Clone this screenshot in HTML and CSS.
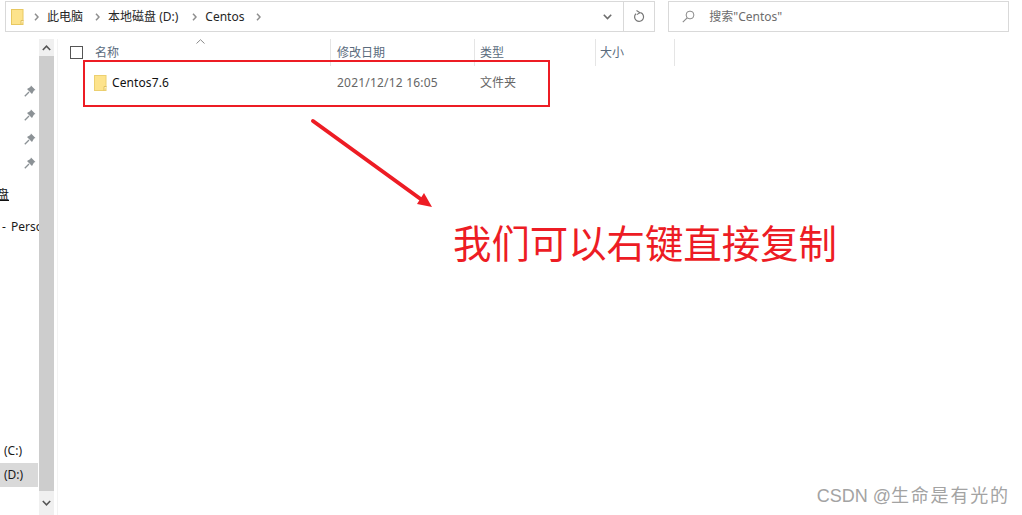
FILE: index.html
```html
<!DOCTYPE html>
<html lang="zh-CN">
<head>
<meta charset="utf-8">
<title>Centos</title>
<link rel="stylesheet" href="styles.css">
</head>
<body>
<div class="window">
  <header class="topbar">
    <div class="address">
      <svg class="crumb-folder" width="13" height="16" viewBox="0 0 13 16"><rect x="0.5" y="0.5" width="11.5" height="15" fill="#fde38c" stroke="#e8c860"/><path d="M10 15.5V11.5H12.5" fill="#fff3c4" stroke="#e0c060"/></svg>
      <svg class="sep" width="5" height="8" viewBox="0 0 5 8"><path d="M1 0.8L4 4L1 7.2" fill="none" stroke="#8f8f8f" stroke-width="1.5"/></svg>
      <span class="crumb">此电脑</span>
      <svg class="sep" width="5" height="8" viewBox="0 0 5 8"><path d="M1 0.8L4 4L1 7.2" fill="none" stroke="#8f8f8f" stroke-width="1.5"/></svg>
      <span class="crumb">本地磁盘 (D:)</span>
      <svg class="sep sep-wide" width="5" height="8" viewBox="0 0 5 8"><path d="M1 0.8L4 4L1 7.2" fill="none" stroke="#8f8f8f" stroke-width="1.5"/></svg>
      <span class="crumb">Centos</span>
      <svg class="sep" width="5" height="8" viewBox="0 0 5 8"><path d="M1 0.8L4 4L1 7.2" fill="none" stroke="#8f8f8f" stroke-width="1.5"/></svg>
      <span class="spacer"></span>
      <svg class="chev" width="9" height="6" viewBox="0 0 9 6"><path d="M0.8 0.8L4.5 4.5L8.2 0.8" fill="none" stroke="#6d6d6d" stroke-width="1.6"/></svg>
      <div class="refresh">
        <svg width="12" height="13" viewBox="0 0 12 13"><path d="M7.5 2.6A4.5 4.5 0 1 1 3 3.6" fill="none" stroke="#777" stroke-width="1.2"/><path d="M3.5 0.5L7 2.7L3.8 4.6" fill="none" stroke="#777" stroke-width="1.1"/></svg>
      </div>
    </div>
    <div class="search">
      <svg width="13" height="13" viewBox="0 0 13 13"><circle cx="8" cy="5" r="3.9" fill="none" stroke="#8a8a8a"/><path d="M5.2 7.8L0.8 12.2" stroke="#8a8a8a" stroke-width="1.1"/></svg>
      <span class="search-text">搜索"Centos"</span>
    </div>
  </header>

  <div class="content">
    <nav class="nav">
      <div class="nav-row pin-row"><svg class="pin" width="12" height="12" viewBox="0 0 12 12"><path d="M7 0.5L11.5 5L10 5.6L8 9L3 4L6.4 2Z" fill="#8c9296"/><path d="M5 7L0.8 11.2" stroke="#8c9296" stroke-width="1.3"/></svg></div>
      <div class="nav-row pin-row"><svg class="pin" width="12" height="12" viewBox="0 0 12 12"><path d="M7 0.5L11.5 5L10 5.6L8 9L3 4L6.4 2Z" fill="#8c9296"/><path d="M5 7L0.8 11.2" stroke="#8c9296" stroke-width="1.3"/></svg></div>
      <div class="nav-row pin-row"><svg class="pin" width="12" height="12" viewBox="0 0 12 12"><path d="M7 0.5L11.5 5L10 5.6L8 9L3 4L6.4 2Z" fill="#8c9296"/><path d="M5 7L0.8 11.2" stroke="#8c9296" stroke-width="1.3"/></svg></div>
      <div class="nav-row pin-row"><svg class="pin" width="12" height="12" viewBox="0 0 12 12"><path d="M7 0.5L11.5 5L10 5.6L8 9L3 4L6.4 2Z" fill="#8c9296"/><path d="M5 7L0.8 11.2" stroke="#8c9296" stroke-width="1.3"/></svg></div>
      <div class="nav-row nav-disk"><span class="disk-clip">本地磁盘</span></div>
      <div class="nav-row nav-person"><span>- Personal</span></div>
      <div class="nav-fill"></div>
      <div class="nav-row nav-drive">(C:)</div>
      <div class="nav-row nav-drive nav-active">(D:)</div>
    </nav>

    <div class="scrollbar">
      <div class="arrow"><svg width="9" height="6" viewBox="0 0 9 6"><path d="M0.8 5L4.5 1.2L8.2 5" fill="none" stroke="#555" stroke-width="1.6"/></svg></div>
      <div class="thumb"></div>
      <div class="arrow"><svg width="9" height="6" viewBox="0 0 9 6"><path d="M0.8 1L4.5 4.8L8.2 1" fill="none" stroke="#555" stroke-width="1.6"/></svg></div>
    </div>

    <main class="files">
      <div class="head">
        <span class="check"></span>
        <div class="col col-name">名称<svg class="sort" width="9" height="5" viewBox="0 0 9 5"><path d="M0.5 4.5L4.5 0.7L8.5 4.5" fill="none" stroke="#8a8a8a"/></svg></div>
        <div class="col col-date">修改日期</div>
        <div class="col col-type">类型</div>
        <div class="col col-size">大小</div>
      </div>
      <div class="row">
        <svg class="row-folder" width="13" height="16" viewBox="0 0 13 16"><rect x="0.5" y="0.5" width="11.5" height="15" fill="#fde38c" stroke="#ecd070"/><path d="M10 15.5V11.5H12.5" fill="#fff3c4" stroke="#e0c060"/></svg>
        <span class="name">Centos7.6</span>
        <span class="date">2021/12/12 16:05</span>
        <span class="type">文件夹</span>
      </div>
    </main>
  </div>
</div>

<div class="mark-box"></div>
<svg class="mark-arrow" width="124" height="92" viewBox="0 0 124 92"><path d="M3 3L112 82" fill="none" stroke="#ed1c24" stroke-width="4" stroke-linecap="round"/><path d="M122 89L107 86L114 75Z" fill="#ed1c24"/></svg>
<div class="mark-text">我们可以右键直接复制</div>
<div class="watermark">CSDN @<span class="wm-cjk">生命是有光的</span></div>
</body>
</html>
```
FILE: styles.css
```css
* { box-sizing: border-box; }
html, body { margin: 0; height: 515px; overflow: hidden; background: #fff; }
body {
  font-family: "Noto Sans", "Noto Sans CJK SC", "Liberation Sans", sans-serif;
  font-size: 12px;
  color: #1a1a1a;
  position: relative;
}
.window { display: flex; flex-direction: column; height: 515px; }

.topbar { display: flex; gap: 13px; padding: 1px 13px 0 5px; height: 39px; flex: none; }
.address {
  width: 651px; height: 31px; border: 1px solid #d9d9d9;
  display: flex; align-items: center; padding-left: 5px;
}
.crumb-folder { flex: none; }
.sep { flex: none; margin: 0 8px 0 12px; }
.crumb-folder + .sep { margin-left: 10px; }
.sep-wide { margin-left: 14px; }
.crumb { white-space: nowrap; line-height: 16px; color: #262626; }
.spacer { flex: 1; }
.chev { margin-right: 11px; }
.refresh {
  width: 31px; height: 29px; border-left: 1px solid #d9d9d9;
  display: flex; align-items: center; justify-content: center;
}
.search {
  width: 341px; height: 31px; border: 1px solid #d9d9d9;
  display: flex; align-items: center; padding-left: 13px; gap: 14px; color: #6d6d6d;
}
.search-text { line-height: 16px; }

.content { flex: 1; display: flex; min-height: 0; }
.nav { width: 39px; flex: none; display: flex; flex-direction: column; padding-top: 40px; overflow: hidden; }
.nav-row { height: 24px; line-height: 24px; flex: none; white-space: nowrap; }
.pin-row { display: flex; align-items: center; justify-content: flex-end; padding-right: 3px; }
.nav-disk { margin-top: 8px; overflow: hidden; text-decoration: underline; color: #111; }
.disk-clip { display: block; margin-left: -39px; }
.nav-person { margin-top: 8px; color: #1a1a1a; padding-left: 2px; overflow: hidden; word-spacing: 2px; }
.nav-fill { flex: 1; }
.nav-drive { padding-left: 4px; color: #1a1a1a; width: 38px; }
.nav-active { background: #d9d9d9; margin-bottom: 28px; }

.scrollbar { width: 15px; flex: none; background: #f0f0f0; display: flex; flex-direction: column; }
.arrow { height: 17px; flex: none; display: flex; align-items: center; justify-content: center; }
.arrow:last-child { height: 24px; }
.thumb { flex: 1; background: #cdcdcd; }

.files { flex: 1; margin-left: 3px; border-left: 1px solid #f3f3f3; min-width: 0; }
.head { display: flex; height: 27px; align-items: stretch; }
.check { width: 13px; height: 13px; border: 1px solid #555; flex: none; margin: 7px 0 0 12px; }
.col {
  line-height: 16px; padding: 6px 0 0 6px; color: #5a6b7d; border-right: 1px solid #e5e5e5; position: relative; flex: none;
}
.col-name { width: 248px; padding-left: 12px; }
.col-date { width: 144px; }
.col-type { width: 121px; padding-left: 5px; }
.col-size { width: 79px; padding-left: 4px; }
.sort { position: absolute; left: 113px; top: 0; }
.row { display: flex; align-items: center; height: 33px; padding-left: 36px; }
.row-folder { flex: none; margin-right: 5px; }
.name { width: 225px; color: #111; line-height: 16px; letter-spacing: 0.1px; }
.date { width: 143px; color: #666; line-height: 16px; letter-spacing: 0.2px; }
.type { color: #666; line-height: 16px; }

.mark-box { position: absolute; left: 83px; top: 60px; width: 467px; height: 47px; border: 2px solid #ed1c24; }
.mark-arrow { position: absolute; left: 310px; top: 118px; }
.mark-text {
  position: absolute; left: 453px; top: 215px; font-size: 38.4px; line-height: 52px; color: #ed1c24;
  white-space: nowrap;
  font-family: "Noto Sans CJK SC", sans-serif; font-weight: 400;
}
.watermark {
  position: absolute; right: 14px; top: 484px; font-size: 18px; line-height: 24px; color: #a3a3a3;
  white-space: nowrap;
  font-family: "Liberation Sans", "Noto Sans CJK SC", sans-serif;
}
.wm-cjk { letter-spacing: 1.8px; margin-right: -1.8px; }
```
